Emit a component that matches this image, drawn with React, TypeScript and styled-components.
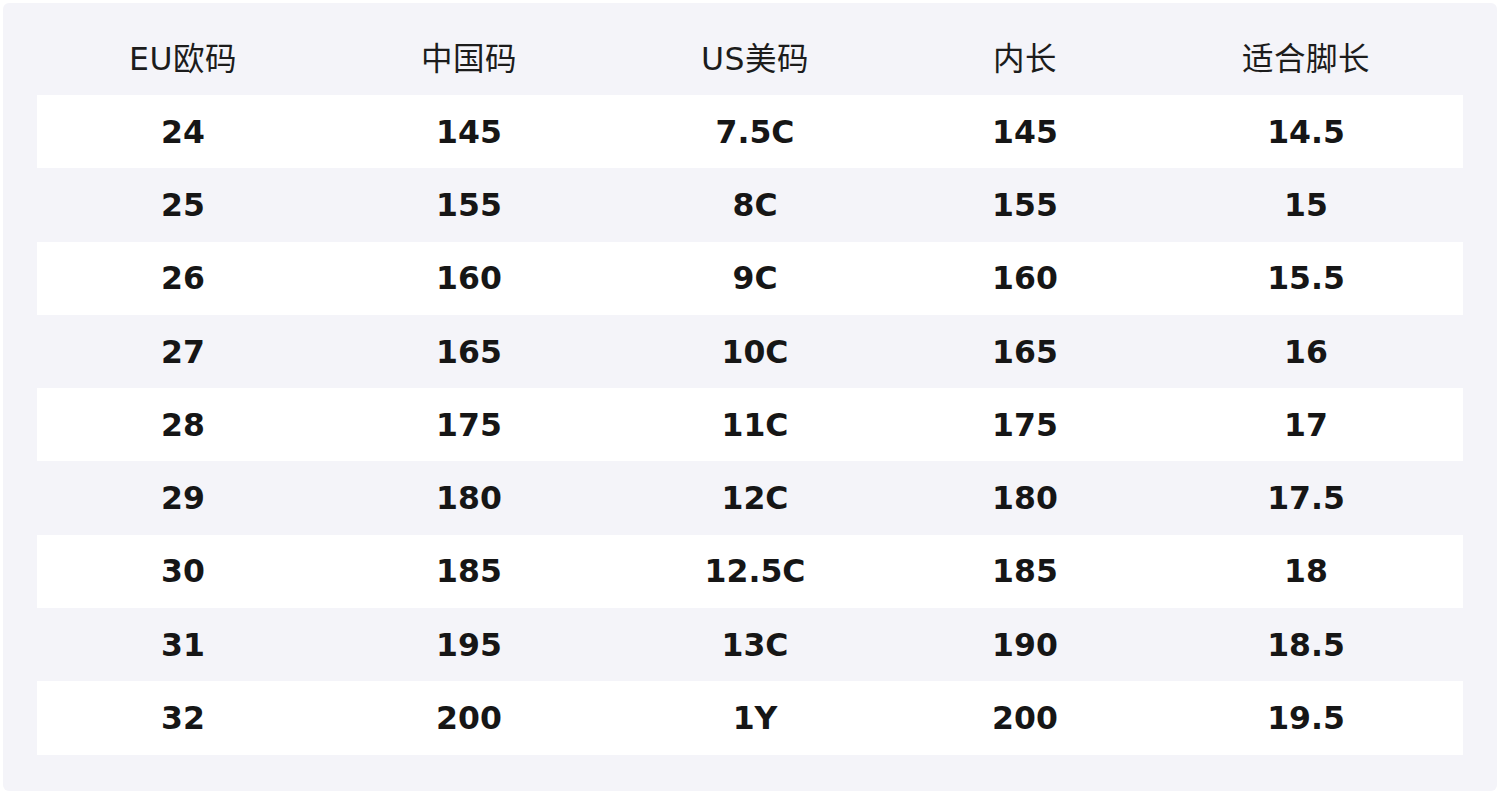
import React from 'react';
import styled, { createGlobalStyle } from 'styled-components';

const GlobalStyle = createGlobalStyle`
  html, body {
    margin: 0;
    padding: 0;
    background: #ffffff;
  }
  body {
    font-family: "DejaVu Sans", "Noto Sans CJK SC", sans-serif;
    color: #161616;
  }
`;

const columns = [
  { title: 'EU欧码', width: 292 },
  { title: '中国码', width: 280 },
  { title: 'US美码', width: 292 },
  { title: '内长', width: 248 },
  { title: '适合脚长', width: 314 },
];

const rows = [
  ['24', '145', '7.5C', '145', '14.5'],
  ['25', '155', '8C', '155', '15'],
  ['26', '160', '9C', '160', '15.5'],
  ['27', '165', '10C', '165', '16'],
  ['28', '175', '11C', '175', '17'],
  ['29', '180', '12C', '180', '17.5'],
  ['30', '185', '12.5C', '185', '18'],
  ['31', '195', '13C', '190', '18.5'],
  ['32', '200', '1Y', '200', '19.5'],
];

const Panel = styled.div`
  margin: 3px;
  width: 1494px;
  height: 788px;
  box-sizing: border-box;
  padding: 16px 34px 36px;
  background: #f4f4f9;
  border-radius: 6px;
`;

const Table = styled.table`
  width: 1426px;
  border-collapse: collapse;
  table-layout: fixed;
`;

const HeadCell = styled.th`
  height: 74px;
  padding: 0 0 2px;
  font-size: 31.5px;
  font-weight: 400;
  letter-spacing: 0.5px;
  text-align: center;
  vertical-align: middle;
  color: #1c1c1c;
`;

const Row = styled.tr<{ $striped: boolean }>`
  background: ${(p) => (p.$striped ? '#ffffff' : 'transparent')};
`;

const Cell = styled.td`
  height: 73.3px;
  padding: 0;
  font-size: 31.5px;
  font-weight: 700;
  text-align: center;
  vertical-align: middle;
  color: #161616;
`;

export default function App() {
  return (
    <>
      <GlobalStyle />
      <Panel>
        <Table>
          <colgroup>
            {columns.map((c) => (
              <col key={c.title} style={{ width: c.width }} />
            ))}
          </colgroup>
          <thead>
            <tr>
              {columns.map((c) => (
                <HeadCell key={c.title}>{c.title}</HeadCell>
              ))}
            </tr>
          </thead>
          <tbody>
            {rows.map((r, i) => (
              <Row key={r[0]} $striped={i % 2 === 0}>
                {r.map((v, j) => (
                  <Cell key={j}>{v}</Cell>
                ))}
              </Row>
            ))}
          </tbody>
        </Table>
      </Panel>
    </>
  );
}
